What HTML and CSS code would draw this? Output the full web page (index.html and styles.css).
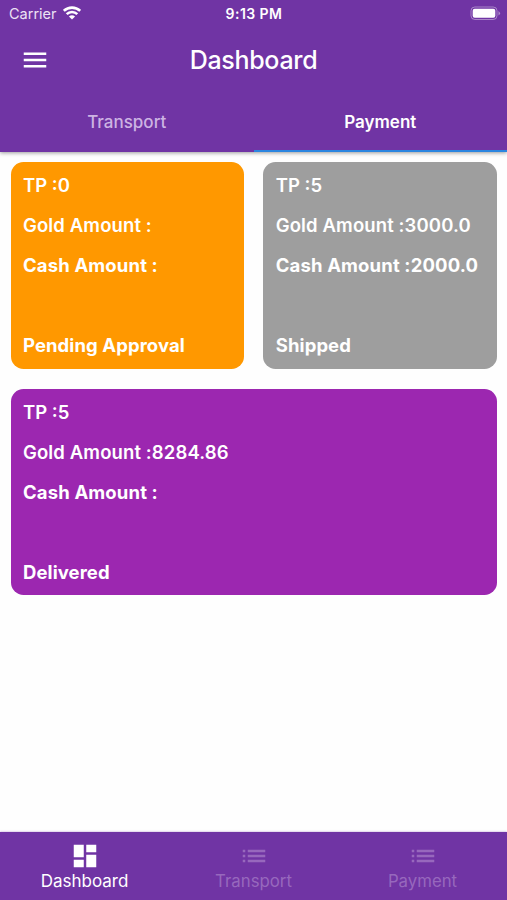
FILE: index.html
```html
<!DOCTYPE html>
<html lang="en">
<head>
<meta charset="utf-8">
<title>Dashboard</title>
<link rel="stylesheet" href="styles.css">
</head>
<body>
<header class="header">
  <div class="status">
    <div class="carrier"><span class="carrier-name">Carrier</span>
      <svg class="wifi" viewBox="0 0 18 14" fill="none" stroke="#fff" stroke-width="2.6"><path d="M.8 4.900C5.400.5 12.600.5 17.200 4.900M3.700 8.100c2.900-2.900 7.700-2.900 10.600 0"/><path d="M9 13.600 5.900 10.500Q9 8.100 12.100 10.500Z" fill="#fff" stroke="none"/></svg>
    </div>
    <span class="clock">9:13 PM</span>
    <svg class="battery" viewBox="0 0 31 15"><rect x="1" y="1" width="26" height="12.500" rx="3.800" fill="none" stroke="#fff" stroke-opacity=".4"/><rect x="2.700" y="2.700" width="22.600" height="9.100" rx="2" fill="#fff"/><path d="M28.500 5v4.500q3-2.250 0-4.500" fill="#fff" fill-opacity=".45"/></svg>
  </div>
  <div class="appbar">
    <svg class="icon" viewBox="0 0 24 24" fill="currentColor"><path d="M3 18h18v-2H3v2zm0-5h18v-2H3v2zm0-7v2h18V6H3z"/></svg>
    <h1 class="title">Dashboard</h1>
  </div>
  <nav class="tabs">
    <div class="tab">Transport</div>
    <div class="tab active">Payment</div>
  </nav>
</header>
<main class="cards">
  <section class="card pending"><p class="tp">TP :0</p><p class="gold">Gold Amount :</p><p class="cash">Cash Amount :</p><p class="state">Pending Approval</p></section>
  <section class="card shipped"><p class="tp">TP :5</p><p class="gold">Gold Amount :3000.0</p><p class="cash">Cash Amount :2000.0</p><p class="state">Shipped</p></section>
  <section class="card delivered"><p class="tp">TP :5</p><p class="gold">Gold Amount :8284.86</p><p class="cash">Cash Amount :</p><p class="state">Delivered</p></section>
</main>
<footer class="bottom">
  <div class="item selected"><svg class="icon" viewBox="0 0 24 24" fill="currentColor"><path d="M3 13h8V3H3v10zm0 8h8v-6H3v6zm10 0h8V11h-8v10zm0-18v6h8V3h-8z"/></svg><span class="label">Dashboard</span></div>
  <div class="item"><svg class="icon" viewBox="0 0 24 24" fill="currentColor"><path d="M3 13h2v-2H3v2zm0 4h2v-2H3v2zm0-8h2V7H3v2zm4 4h14v-2H7v2zm0 4h14v-2H7v2zM7 7v2h14V7H7z"/></svg><span class="label">Transport</span></div>
  <div class="item"><svg class="icon" viewBox="0 0 24 24" fill="currentColor"><path d="M3 13h2v-2H3v2zm0 4h2v-2H3v2zm0-8h2V7H3v2zm4 4h14v-2H7v2zm0 4h14v-2H7v2zM7 7v2h14V7H7z"/></svg><span class="label">Payment</span></div>
</footer>
</body>
</html>
```
FILE: styles.css
```css
* { box-sizing: border-box; }
body {
  margin: 0;
  height: 900px;
  display: flex;
  flex-direction: column;
  background: #fefefe;
  color: #fff;
  font-family: Inter, "Liberation Sans", sans-serif;
  overflow: hidden;
}
.header {
  height: 152px;
  background: #7034a4;
  box-shadow: 0 1px 4px rgba(0, 0, 0, .4);
}
.status {
  height: 27px;
  display: grid;
  grid-template-columns: 1fr auto 1fr;
  align-items: center;
  padding: 0 6px 0 9px;
  font-size: 14.5px;
}
.carrier { display: flex; align-items: center; gap: 6px; color: #ece2f4; }
.wifi { width: 18px; height: 14px; margin-bottom: 1px; }
.clock { font-weight: 600; font-size: 14px; letter-spacing: .45px; margin-right: 2px; }
.battery { width: 31px; height: 15px; justify-self: end; }
.appbar {
  height: 65px;
  display: grid;
  grid-template-columns: 30px 1fr 30px;
  align-items: center;
  padding: 0 20px;
}
.icon { width: 30px; height: 30px; display: block; }
.title {
  margin: 0;
  text-align: center;
  font-size: 25px;
  font-weight: 500;
  letter-spacing: -.3px;
}
.tabs { display: flex; height: 60px; }
.tab {
  flex: 1;
  height: 60px;
  padding-top: 2px;
  display: flex;
  align-items: center;
  justify-content: center;
  font-size: 17px;
  font-weight: 500;
  color: #cdb3e3;
  border-bottom: 2px solid transparent;
}
.active { color: #fff; border-color: #2b86e0; font-weight: 600; }
.cards {
  flex: 1;
  display: grid;
  grid-template-columns: 1fr 1fr;
  grid-template-rows: 206.8px 206.8px;
  align-content: start;
  column-gap: 19px;
  row-gap: 19.8px;
  padding: 10px 10px 0 10.5px;
}
.card {
  border-radius: 12.5px;
  padding: 3px 12.500px 0;
  font-size: 18.5px;
  line-height: 40px;
  font-weight: 600;
}
.card p { margin: 0; white-space: nowrap; }
.gold { letter-spacing: .12px; }
.cash { font-weight: 700; letter-spacing: .14px; }
.card .state { margin-top: 40px; font-weight: 700; letter-spacing: .08px; }
.pending { background: #ff9800; }
.shipped { background: #9e9e9e; }
.delivered { background: #9c27b0; grid-column: 1 / 3; }
.bottom {
  height: 68px;
  display: flex;
  background: #7034a4;
  box-shadow: 0 0 2px rgba(112, 52, 164, .5);
}
.item {
  flex: 1;
  display: flex;
  flex-direction: column;
  align-items: center;
  padding-top: 9px;
  color: #9768bd;
}
.label { font-size: 16.800px; line-height: 20px; }
.selected { color: #fff; }
.selected .label { font-size: 17px; }
```
